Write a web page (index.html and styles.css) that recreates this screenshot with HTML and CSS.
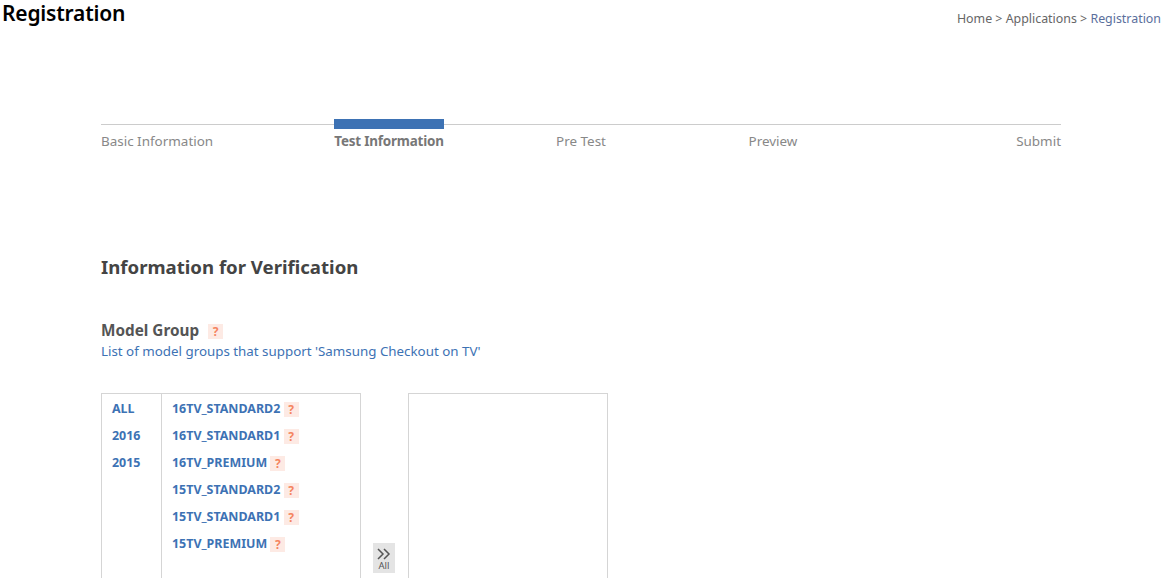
FILE: index.html
```html
<!DOCTYPE html>
<html lang="en">
<head>
    <meta charset="UTF-8">
    <meta name="viewport" content="width=device-width, initial-scale=1.0">
    <title>Registration</title>
    <link rel="stylesheet" href="styles.css">
</head>
<body>
    <!-- Page title and breadcrumb -->
    <div class="page-head">
        <h1>Registration</h1>
        <div class="breadcrumb">Home &gt; Applications &gt; <span class="current">Registration</span></div>
    </div>

    <div class="content">
        <!-- Steps -->
        <ol class="steps">
            <li>Basic Information</li>
            <li class="active"><span>Test Information</span></li>
            <li>Pre Test</li>
            <li>Preview</li>
            <li>Submit</li>
        </ol>

        <h2>Information for Verification</h2>

        <h3>Model Group <span class="help help-title">?</span></h3>
        <p class="desc">List of model groups that support 'Samsung Checkout on TV'</p>

        <!-- Model picker -->
        <div class="picker">
            <div class="picker-source">
                <ul class="years">
                    <li>ALL</li>
                    <li>2016</li>
                    <li>2015</li>
                </ul>
                <ul class="models">
                    <li>16TV_STANDARD2 <span class="help">?</span></li>
                    <li>16TV_STANDARD1 <span class="help">?</span></li>
                    <li>16TV_PREMIUM <span class="help">?</span></li>
                    <li>15TV_STANDARD2 <span class="help">?</span></li>
                    <li>15TV_STANDARD1 <span class="help">?</span></li>
                    <li>15TV_PREMIUM <span class="help">?</span></li>
                </ul>
            </div>
            <div class="picker-actions">
                <button class="move-all" type="button">
                    <svg width="14" height="12" viewBox="0 0 14 12" fill="none" stroke="#555" stroke-width="1.5">
                        <path d="M1 1l5 5-5 5M7 1l5 5-5 5"/>
                    </svg>
                    <span>All</span>
                </button>
            </div>
            <div class="picker-target"></div>
        </div>
    </div>
</body>
</html>
```

FILE: styles.css
```css
html, body {
    height: 578px;
    overflow: hidden;
}
body {
    margin: 0;
    font-family: "Noto Sans", "Open Sans", sans-serif;
    font-size: 14px;
    color: #666;
    background-color: white;
}
ul, ol {
    list-style: none;
    margin: 0;
    padding: 0;
}
.page-head {
    display: flex;
    justify-content: space-between;
    align-items: flex-start;
    height: 26px;
    padding: 0 6px 0 2px;
}
h1 {
    margin: 1px 0 0;
    font-size: 21px;
    line-height: 25px;
    font-weight: 600;
    letter-spacing: -0.2px;
    color: black;
}
.breadcrumb {
    margin-top: 10px;
    font-size: 12.4px;
    line-height: 18px;
    color: #666;
}
.breadcrumb .current {
    color: #5b6f9c;
}
.content {
    width: 960px;
    margin-left: 101px;
}
.steps {
    display: grid;
    grid-template-columns: repeat(5, 1fr);
    margin-top: 98px;
    border-top: 1px solid #ccc;
    font-size: 13.45px;
    line-height: 20px;
    color: #888;
    padding-top: 6px;
}
.steps li {
    text-align: center;
}
.steps li:first-child {
    text-align: left;
}
.steps li:last-child {
    text-align: right;
}
.steps .active {
    font-weight: 700;
    letter-spacing: -0.2px;
    color: #777;
}
.steps .active span {
    display: inline-block;
    position: relative;
}
.steps .active span::before {
    content: "";
    position: absolute;
    left: 0;
    right: 0;
    top: -12px;
    height: 10px;
    background-color: #3d72b4;
}
h2 {
    margin: 104px 0 0;
    font-size: 18.6px;
    line-height: 24px;
    font-weight: 700;
    color: #444;
}
h3 {
    margin: 41px 0 0;
    font-size: 15.3px;
    line-height: 20px;
    font-weight: 700;
    color: #555;
}
.desc {
    margin: 1px 0 0;
    font-size: 13.35px;
    line-height: 20px;
    color: #3d72b4;
}
.help {
    display: inline-block;
    width: 15px;
    height: 15px;
    background-color: #fdeae4;
    color: #f5845f;
    font-size: 12px;
    line-height: 15px;
    font-weight: 700;
    letter-spacing: 0;
    text-align: center;
    vertical-align: middle;
}
.help-title {
    margin-left: 5px;
}
.picker {
    display: flex;
    margin-top: 32px;
}
.picker-source {
    display: flex;
    width: 260px;
    height: 240px;
    box-sizing: border-box;
    border: 1px solid #d5d5d5;
}
.years {
    width: 60px;
    padding: 1px 0 0 10px;
    box-sizing: border-box;
    border-right: 1px solid #d5d5d5;
}
.models {
    padding: 1px 0 0 10px;
}
.years li, .models li {
    height: 27px;
    line-height: 27px;
    font-size: 12.45px;
    font-weight: 700;
    color: #3d72b4;
    white-space: nowrap;
}
.picker-actions {
    width: 47px;
    padding: 150px 0 0 12px;
    box-sizing: border-box;
}
.move-all {
    display: flex;
    flex-direction: column;
    align-items: center;
    width: 22px;
    height: 30px;
    padding: 5px 0 0;
    border: none;
    background-color: #e4e4e4;
    font-family: inherit;
}
.move-all span {
    font-size: 9.5px;
    line-height: 11px;
    color: #555;
}
.picker-target {
    width: 200px;
    height: 240px;
    box-sizing: border-box;
    border: 1px solid #d5d5d5;
}
```
